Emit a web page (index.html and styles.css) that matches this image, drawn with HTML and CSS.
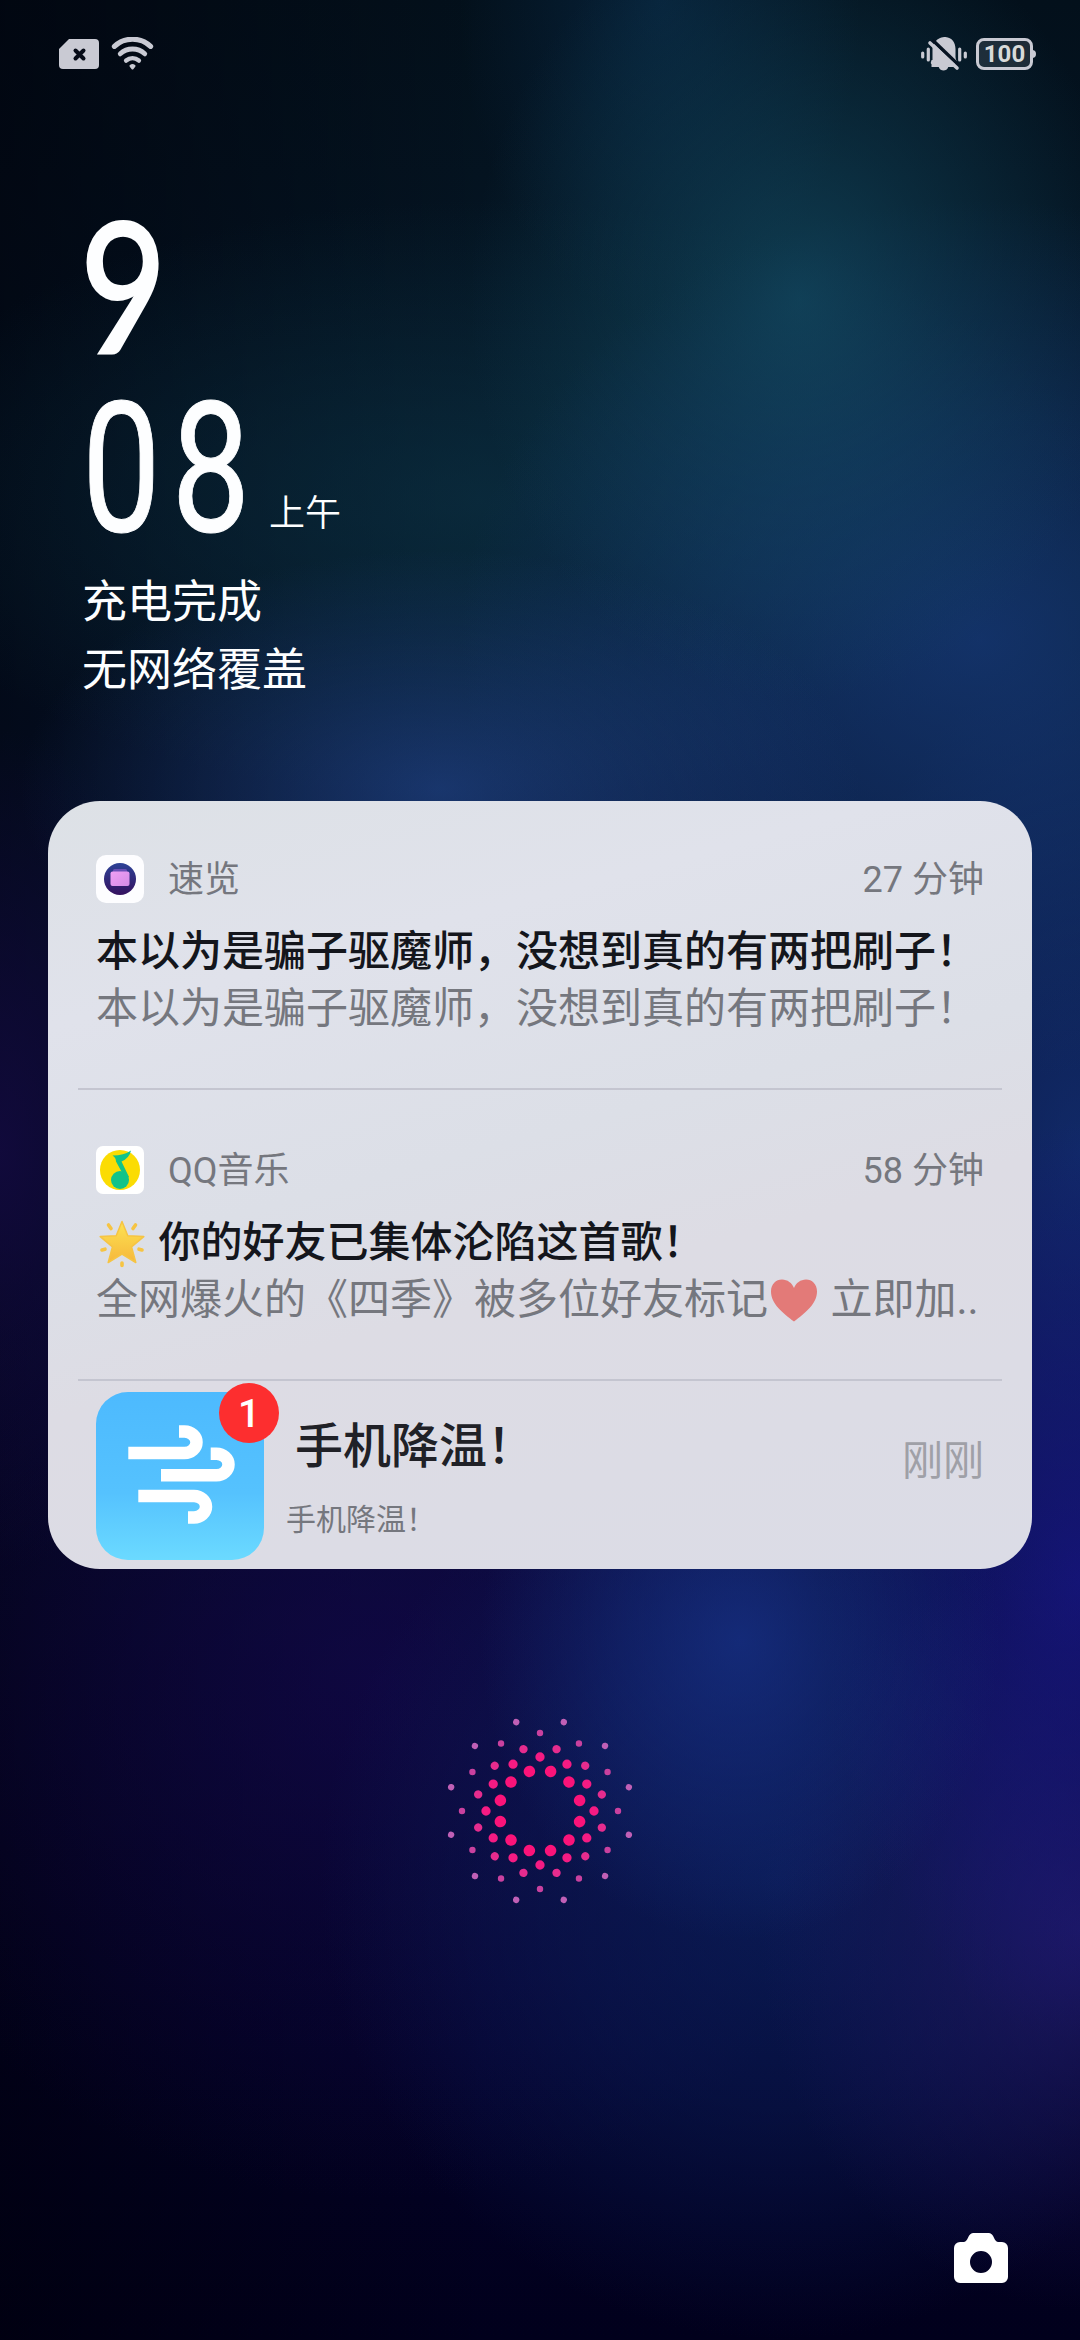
FILE: index.html
```html
<!DOCTYPE html>
<html lang="zh-CN">
<head>
<meta charset="utf-8">
<title>锁屏</title>
<link rel="stylesheet" href="styles.css">
</head>
<body>
<main class="lockscreen">
  <header class="statusbar">
    <div class="statusbar-group">
      <svg class="icon-sim" viewBox="0 0 40 30"><path fill="#c9cad3" fill-rule="evenodd" d="M10 0H36a4 4 0 0 1 4 4V26a4 4 0 0 1-4 4H4a4 4 0 0 1-4-4V10Z"/><path d="M16.500 11.500l8 8M24.500 11.500l-8 8" stroke="#060b17" stroke-width="4" stroke-linecap="round"/></svg>
      <svg class="icon-wifi" viewBox="0 0 44 34" fill="none" stroke="#c9cad3" stroke-linecap="round"><path d="M3.500 9.200a27 27 0 0 1 37 0" stroke-width="5.300"/><path d="M9.500 16.800a18.500 18.500 0 0 1 25 0" stroke-width="5"/><path d="M15.500 23.700a10.500 10.500 0 0 1 13 0" stroke-width="4.600"/><path d="M22 31.500l-1.800-2.200a3 3 0 0 1 3.600 0z" fill="#c9cad3" stroke-width="2.600" stroke-linejoin="round"/></svg>
    </div>
    <div class="statusbar-group">
      <svg class="icon-mute" viewBox="0 0 46 36" fill="#c9cad3"><path d="M14 5C17 1 21 0 24.500 0C31 .5 34.500 5.500 34.500 12v8c0 3 2 4.500 2 7H10.500c-1.500-1-.5-2.500 1-4V10ZM17.500 29.500h10c-1 3-3 4-5 4s-4-1-5-4z"/><path d="M10.500 23H34v7H10.500z"/><path d="M11.500 3L38 28.500" stroke="#071322" stroke-width="3.500"/><path d="M9 6L36 31" stroke="#c9cad3" stroke-width="3.600" stroke-linecap="round"/><path d="M1.700 16v4M7.300 12v11M38.700 12v11M44.300 16v4" stroke="#c9cad3" stroke-width="3.200" stroke-linecap="round"/></svg>
      <div class="battery"><span class="battery-level">100</span></div>
    </div>
  </header>

  <section class="clock">
    <div class="clock-row"><span class="digits digits-hour">9</span></div>
    <div class="clock-row"><span class="digits digits-minute">08</span><span class="meridiem">上午</span></div>
    <p class="clock-note">充电完成</p>
    <p class="clock-note">无网络覆盖</p>
  </section>

  <section class="notifications">
    <article class="notice">
      <div class="notice-head">
        <svg class="app-icon" viewBox="0 0 48 48"><defs><linearGradient id="orb" x1="0" y1="0" x2="0" y2="1"><stop offset="0" stop-color="#2d4297"/><stop offset="1" stop-color="#35115f"/></linearGradient><linearGradient id="pane" x1="0" y1="0" x2="1" y2="1"><stop offset="0" stop-color="#f0a0f4"/><stop offset="1" stop-color="#d58be6"/></linearGradient></defs><rect width="48" height="48" rx="10" fill="#fdfdff"/><circle cx="24" cy="24" r="16" fill="url(#orb)"/><rect x="17" y="14" width="14" height="4" rx="1.500" fill="#6a4fb5"/><rect x="14.500" y="16.500" width="19" height="14.500" rx="2" fill="url(#pane)"/></svg>
        <span class="app-name">速览</span>
        <span class="time">27 分钟</span>
      </div>
      <h2 class="notice-title">本以为是骗子驱魔师，没想到真的有两把刷子！</h2>
      <p class="notice-text">本以为是骗子驱魔师，没想到真的有两把刷子！</p>
    </article>

    <article class="notice notice-music">
      <div class="notice-head">
        <svg class="app-icon" viewBox="0 0 48 48"><rect width="48" height="48" rx="7" fill="#fff"/><circle cx="24" cy="24" r="20" fill="#fbdc03"/><circle cx="24" cy="34" r="9" fill="#12c389"/><path fill="#12c389" d="M16.500 9.500Q28 9.500 35 4.500Q33.500 12 25.500 15.500L33 31L29 32L20 15.500Q20 11.500 16.500 9.500Z"/></svg>
        <span class="app-name">QQ音乐</span>
        <span class="time">58 分钟</span>
      </div>
      <h2 class="notice-title"><svg class="emoji" viewBox="0 0 52 50"><defs><linearGradient id="gold" x1="0" y1="0" x2="0" y2="1"><stop offset="0" stop-color="#fde352"/><stop offset="1" stop-color="#f6b73c"/></linearGradient></defs><g stroke="#f6c443" stroke-width="3.600" stroke-linecap="round"><path d="M12.500 6l2.500 3.500M39.500 6l-2.500 3.500M6 31l3-.8M46 31l-3-.8M26 46.500v-2.500"/></g><path d="M26 2.500l5.800 14.200 16 .9-12.300 10.200 4.300 15.700L26 35l-13.800 8.500 4.300-15.700L4.200 17.600l16-.9z" fill="url(#gold)" stroke="#f6c443" stroke-width="1.500" stroke-linejoin="round"/></svg> 你的好友已集体沦陷这首歌！</h2>
      <p class="notice-text">全网爆火的《四季》被多位好友标记<svg class="emoji" viewBox="0 0 52 50"><path d="M26 45.500C15 37 3 28 3 15.500C3 8 8 3.500 14 3.500C19.500 3.500 24 7 26 12C28 7 32.500 3.500 38 3.500C44 3.500 49 8 49 15.500C49 28 37 37 26 45.500Z" fill="#e37a78"/></svg> 立即加..</p>
    </article>

    <article class="promo">
      <div class="promo-icon">
        <svg class="wind" viewBox="0 0 168 168" fill="none" stroke="#fff" stroke-width="12.500"><path d="M32.300 61H88.500a12 10.700 0 0 0 0-21.400H83"/><path d="M65 83.200H120.500a12 10.700 0 0 0 0-21.400H114.700"/><path d="M42.300 104H98a12 10.700 0 0 1 0 21.400H92"/></svg>
        <span class="badge">1</span>
      </div>
      <div class="promo-body">
        <h2 class="promo-title">手机降温！</h2>
        <p class="promo-text">手机降温！</p>
      </div>
      <span class="promo-time">刚刚</span>
    </article>
  </section>

  <svg class="fingerprint" viewBox="-100 -100 200 200" fill="none" stroke-linecap="round">
    <circle r="41" pathLength="12" stroke-dasharray="0 1" stroke-width="11.500" stroke="#fb1379" transform="rotate(15)"/>
    <circle r="54" pathLength="12" stroke-dasharray="0 1" stroke-width="9.300" stroke="#f51b83"/>
    <circle r="64" pathLength="12" stroke-dasharray="0 1" stroke-width="8.300" stroke="#e62c8e" transform="rotate(15)"/>
    <circle r="78" pathLength="12" stroke-dasharray="0 1" stroke-width="6.400" stroke="#c9419f"/>
    <circle r="92" pathLength="12" stroke-dasharray="0 1" stroke-width="6.400" stroke="#c060b6" transform="rotate(15)"/>
  </svg>

  <footer class="shortcuts">
    <svg class="icon-camera" viewBox="0 0 54 50"><path fill="#fff" fill-rule="evenodd" d="M19 0H35C40 0 40 9 44 9H48a6 6 0 0 1 6 6V44a6 6 0 0 1-6 6H6a6 6 0 0 1-6-6V15A6 6 0 0 1 6 9H10C14 9 14 0 19 0ZM27 18a11 11 0 1 0 0 22a11 11 0 1 0 0-22Z"/></svg>
  </footer>
</main>
</body>
</html>
```
FILE: styles.css
```css
* {
  box-sizing: border-box;
}

body {
  margin: 0;
  font-family: Roboto, "Noto Sans CJK SC", sans-serif;
}

h2,
p {
  margin: 0;
  font-weight: 400;
}

svg {
  display: block;
  flex: none;
}

.lockscreen {
  display: flex;
  flex-direction: column;
  width: 1080px;
  height: 2340px;
  overflow: hidden;
  background:
    radial-gradient(ellipse 330px 400px at 800px 300px, rgba(20, 78, 102, 0.7), rgba(20, 78, 102, 0.4) 40%, transparent),
    radial-gradient(ellipse 200px 320px at 660px 0, rgba(10, 46, 78, 0.6), transparent),
    radial-gradient(ellipse 420px 240px at 440px 790px, rgba(34, 70, 140, 0.65), rgba(34, 70, 140, 0.35) 45%, transparent),
    radial-gradient(ellipse 520px 440px at 980px 640px, rgba(24, 60, 128, 0.7), rgba(24, 60, 128, 0.4) 50%, transparent),
    radial-gradient(ellipse 620px 300px at 480px 500px, rgba(12, 52, 70, 0.6), transparent),
    radial-gradient(ellipse 260px 300px at 740px 1640px, rgba(24, 52, 140, 0.7), rgba(24, 52, 140, 0.4) 45%, transparent),
    radial-gradient(ellipse 260px 460px at 1080px 1580px, rgba(24, 22, 136, 0.75), rgba(24, 22, 136, 0.4) 50%, transparent),
    radial-gradient(ellipse 320px 380px at 1080px 1930px, rgba(38, 28, 112, 0.7), rgba(38, 28, 112, 0.35) 45%, transparent),
    radial-gradient(ellipse 460px 460px at 780px 1880px, rgba(12, 36, 100, 0.7), rgba(12, 36, 100, 0.4) 50%, transparent),
    radial-gradient(ellipse 560px 520px at 380px 1680px, rgba(20, 8, 78, 0.65), transparent),
    radial-gradient(ellipse 200px 420px at 0 1150px, rgba(20, 10, 66, 0.8), transparent),
    radial-gradient(ellipse 260px 500px at 1080px 1150px, rgba(20, 50, 120, 0.7), transparent),
    linear-gradient(90deg, rgba(0, 0, 10, 0.6), transparent 45%),
    linear-gradient(#03101b, #061a2c 25%, #0a1440 50%, #06072e 72%, #030228 88%, #01001c);
}

.statusbar {
  display: flex;
  justify-content: space-between;
  padding: 37px 45px 0 59px;
  height: 200px;
}

.statusbar-group {
  display: flex;
  align-items: flex-start;
}

.icon-sim {
  width: 40px;
  height: 30px;
  margin: 2px 12px 0 0;
}

.icon-wifi {
  width: 43px;
  height: 34px;
}

.icon-mute {
  width: 46px;
  height: 36px;
  margin-right: 9px;
}

.battery {
  position: relative;
  width: 57px;
  height: 32px;
  margin: 1px 2px 0 0;
  border: 3px solid #c9cad3;
  border-radius: 8px;
  background: rgba(90, 100, 110, 0.3);
}

.battery::after {
  content: "";
  position: absolute;
  top: 9px;
  right: -6px;
  width: 4px;
  height: 8px;
  border-radius: 0 4px 4px 0;
  background: #c9cad3;
}

.battery-level {
  display: block;
  color: #d8dad9;
  font-size: 24px;
  font-weight: 700;
  line-height: 27px;
  text-align: center;
}

.clock {
  height: 601px;
  padding-left: 82px;
  color: #fdfeff;
}

.clock-row {
  display: flex;
  align-items: baseline;
  height: 179px;
  line-height: 179px;
}

.digits {
  transform-origin: left;
}

.digits-hour {
  width: 100px;
  font-family: Lato, Roboto, sans-serif;
  font-size: 182px;
  font-weight: 500;
  -webkit-text-stroke: 2px #fdfeff;
  transform: translate(-2px, -7px) scaleX(0.82);
}

.digits-minute {
  width: 187px;
  font-size: 182px;
  font-weight: 450;
  letter-spacing: 14px;
  -webkit-text-stroke: 1px #fdfeff;
  transform: scaleX(0.77);
}

.meridiem {
  font-size: 36px;
  font-weight: 350;
  transform: translateY(-5px);
}

.clock-note {
  position: relative;
  top: 11px;
  font-size: 45px;
  line-height: 67.500px;
}

.notifications {
  width: 984px;
  height: 768px;
  margin: 0 48px;
  border-radius: 52px;
  background: linear-gradient(165deg, #dde1e6, #e0e2eb 22%, #dcdfe7 45%, #dddce4 60%, #dbdce6);
}

.notice {
  height: 287px;
  padding: 54px 48px 0;
}

.notice-music {
  height: 291px;
  padding-top: 58px;
}

.notice + .notice,
.promo {
  background: linear-gradient(#c4c5d0, #c4c5d0) 30px 0 / 924px 2px no-repeat;
}

.notice-head {
  display: flex;
  align-items: center;
  height: 48px;
  margin-bottom: 20px;
  color: #75777e;
  font-size: 36px;
  line-height: 44px;
}

.app-icon {
  width: 48px;
  height: 48px;
}

.app-name {
  margin: 2px 0 0 24px;
}

.time {
  margin: 2px 0 0 auto;
}

.notice-title,
.notice-text {
  font-size: 42px;
  line-height: 57px;
  white-space: nowrap;
}

.notice-title {
  color: #14161c;
  font-weight: 500;
}

.notice-text {
  color: #75777e;
}

.emoji {
  display: inline-block;
  width: 52px;
  height: 50px;
  margin: -6px 0;
  vertical-align: -6px;
}

.promo {
  display: flex;
  height: 190px;
  padding: 13px 48px 0;
}

.promo-icon {
  position: relative;
  width: 168px;
  height: 168px;
  border-radius: 32px;
  background: linear-gradient(#4dbafe, #55c2fe 60%, #6bdaff);
}

.wind {
  width: 168px;
  height: 168px;
}

.badge {
  position: absolute;
  top: -9px;
  right: -15px;
  width: 60px;
  height: 60px;
  border-radius: 50%;
  background: #fd2e2f;
  color: #fff;
  font-size: 39px;
  font-weight: 500;
  line-height: 62px;
  text-align: center;
}

.promo-body {
  margin-left: 22px;
}

.promo-title {
  margin: 19px 0 0 9px;
  color: #202127;
  font-size: 48px;
  font-weight: 500;
  line-height: 72px;
}

.promo-text {
  margin-top: 17px;
  color: #75777e;
  font-size: 30px;
  line-height: 40px;
}

.promo-time {
  margin: 49px 0 0 auto;
  color: #9fa0a7;
  font-size: 41px;
  line-height: 40px;
}

.fingerprint {
  width: 200px;
  height: 200px;
  margin: 142px auto 0;
}

.shortcuts {
  display: flex;
  justify-content: flex-end;
  margin: auto 72px 57px;
}

.icon-camera {
  width: 54px;
  height: 50px;
}
```
